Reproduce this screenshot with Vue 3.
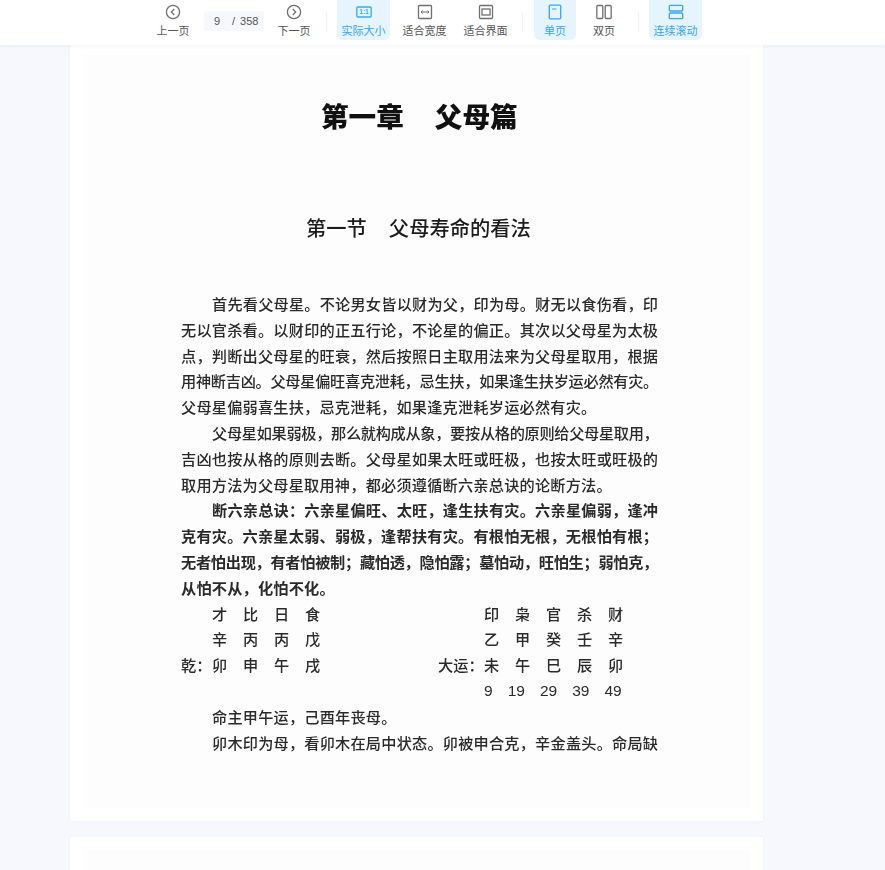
<template>
  <div class="reader">
    <header class="toolbar">
      <div class="group nav">
        <button class="tool">
          <svg class="icon" viewBox="0 0 16 16"><circle cx="8" cy="8" r="6.6" /><path d="M9.300 5 6.300 8l3 3" /></svg>
          <span>上一页</span>
        </button>
        <div class="page-box"><span class="cur">9</span><span>/</span><span class="total">358</span></div>
        <button class="tool">
          <svg class="icon" viewBox="0 0 16 16"><circle cx="8" cy="8" r="6.6" /><path d="M6.700 5l3 3-3 3" /></svg>
          <span>下一页</span>
        </button>
      </div>
      <i class="sep"></i>
      <div class="group">
        <button class="tool wide active">
          <svg class="icon" viewBox="0 0 16 16">
            <rect x="0.800" y="3" width="14.400" height="10" rx="1" />
            <text x="8" y="10.300" text-anchor="middle" class="ratio">1:1</text>
          </svg>
          <span>实际大小</span>
        </button>
        <button class="tool wide">
          <svg class="icon" viewBox="0 0 16 16"><rect x="1.500" y="1.500" width="13" height="13" rx="1" /><path class="thin" d="M4 8h8M5.500 6.500 4 8l1.500 1.500M10.500 6.500 12 8l-1.500 1.500" /></svg>
          <span>适合宽度</span>
        </button>
        <button class="tool wide">
          <svg class="icon" viewBox="0 0 16 16"><rect x="1.500" y="1.500" width="13" height="13" rx="1" /><rect x="4" y="5" width="8" height="6" /></svg>
          <span>适合界面</span>
        </button>
      </div>
      <i class="sep"></i>
      <div class="group views">
        <button class="tool narrow active">
          <svg class="icon" viewBox="0 0 16 16"><rect x="2.300" y="1.200" width="11.400" height="13.600" rx="1" /><path class="thin" d="M5 5h4.500" /></svg>
          <span>单页</span>
        </button>
        <button class="tool narrow">
          <svg class="icon" viewBox="0 0 16 16"><rect x="0.800" y="1.500" width="6" height="13" rx="1" /><rect x="9.200" y="1.500" width="6" height="13" rx="1" /></svg>
          <span>双页</span>
        </button>
      </div>
      <i class="sep"></i>
      <button class="tool wide active">
        <svg class="icon" viewBox="0 0 16 16"><rect x="1.300" y="1.300" width="13.400" height="5.700" rx="1" /><rect x="1.300" y="9" width="13.400" height="5.700" rx="1" /></svg>
        <span>连续滚动</span>
      </button>
    </header>

    <main class="pages">
      <section class="page">
        <div class="scan">
          <h1 class="chapter"><span>第一章</span><span>父母篇</span></h1>
          <h2 class="section"><span>第一节</span><span>父母寿命的看法</span></h2>

          <div class="body">
            <div v-for="(line, i) in lines" :key="i" class="line" :class="[line.fit, { indent: line.indent, bold: line.bold, free: line.free }]">{{ line.text }}</div>

            <div class="bazi">
              <template v-for="(row, r) in bazi" :key="r">
                <span v-for="(c, j) in row.left" :key="'l' + j">{{ c }}</span>
                <span></span>
                <span v-for="(c, j) in row.right" :key="'r' + j">{{ c }}</span>
              </template>
              <div class="ages"><span v-for="a in ages" :key="a">{{ a }}</span></div>
            </div>

            <div class="line indent free">命主甲午运，己酉年丧母。</div>
            <div class="line indent">卯木印为母，看卯木在局中状态。卯被申合克，辛金盖头。命局缺</div>
          </div>
        </div>
      </section>
      <section class="page next"><div class="scan"></div></section>
    </main>
  </div>
</template>

<script setup>
// some lines of the scan hold one or two more characters, so they get squeezed
const lines = [
  { text: '首先看父母星。不论男女皆以财为父，印为母。财无以食伤看，印', indent: true },
  { text: '无以官杀看。以财印的正五行论，不论星的偏正。其次以父母星为太极' },
  { text: '点，判断出父母星的旺衰，然后按照日主取用法来为父母星取用，根据' },
  { text: '用神断吉凶。父母星偏旺喜克泄耗，忌生扶，如果逢生扶岁运必然有灾。', fit: 'tight' },
  { text: '父母星偏弱喜生扶，忌克泄耗，如果逢克泄耗岁运必然有灾。', free: true },
  { text: '父母星如果弱极，那么就构成从象，要按从格的原则给父母星取用，', indent: true, fit: 'tighter' },
  { text: '吉凶也按从格的原则去断。父母星如果太旺或旺极，也按太旺或旺极的' },
  { text: '取用方法为父母星取用神，都必须遵循断六亲总诀的论断方法。', free: true },
  { text: '断六亲总诀：六亲星偏旺、太旺，逢生扶有灾。六亲星偏弱，逢冲', indent: true, bold: true },
  { text: '克有灾。六亲星太弱、弱极，逢帮扶有灾。有根怕无根，无根怕有根；', bold: true },
  { text: '无者怕出现，有者怕被制；藏怕透，隐怕露；墓怕动，旺怕生；弱怕克，', bold: true, fit: 'tight' },
  { text: '从怕不从，化怕不化。', bold: true, free: true }
]

const bazi = [
  { left: ['', '才', '比', '日', '食'], right: ['', '印', '枭', '官', '杀', '财'] },
  { left: ['', '辛', '丙', '丙', '戊'], right: ['', '乙', '甲', '癸', '壬', '辛'] },
  { left: ['乾：', '卯', '申', '午', '戌'], right: ['大运：', '未', '午', '巳', '辰', '卯'] }
]

const ages = [9, 19, 29, 39, 49]
</script>

<style scoped>
.reader {
  width: 885px;
  height: 870px;
  overflow: hidden;
  background: #f6f8fd;
  font-family: "Noto Sans CJK SC", "Liberation Sans", sans-serif;
}

.toolbar {
  height: 45px;
  box-sizing: border-box;
  padding-left: 156px;
  display: flex;
  align-items: flex-start;
  background: #fff;
  box-shadow: 0 1px 4px rgba(30, 50, 90, 0.06);
  position: relative;
}

.group {
  display: flex;
  align-items: flex-start;
  gap: 8px;
}

.group.nav {
  gap: 0;
  margin-right: 5px;
}

.group.views {
  gap: 7px;
  margin: 0 3px 0 1px;
}

.tool {
  width: 34px;
  height: 40px;
  padding: 4px 0 0;
  border: none;
  border-radius: 0 0 6px 6px;
  background: none;
  color: #555;
  font: inherit;
  font-size: 11px;
  line-height: 16px;
  display: flex;
  flex-direction: column;
  align-items: center;
  gap: 2px;
  cursor: pointer;
}

.tool.wide {
  width: 53px;
}

.tool.narrow {
  width: 42px;
}

.tool.active {
  background: #e6f4fe;
  color: #3aa6ee;
}

.sep {
  width: 1px;
  height: 20px;
  margin: 12px 10px 0;
  background: #f1f2f5;
}

.icon {
  width: 16px;
  height: 16px;
  fill: none;
  stroke: #707070;
  stroke-width: 1.300;
}

.active .icon {
  stroke: #3aa6ee;
}

.icon .thin {
  stroke-width: 1;
}

.icon .ratio {
  fill: #3aa6ee;
  stroke: none;
  font-family: "Liberation Sans", sans-serif;
  font-size: 6.500px;
  font-weight: 700;
}

.page-box {
  width: 60px;
  height: 20px;
  margin: 11px 13px 0 14px;
  box-sizing: border-box;
  padding-left: 10px;
  display: flex;
  align-items: center;
  background: #f6f8fd;
  border-radius: 2px;
  color: #555;
  font-family: "Liberation Sans", sans-serif;
  font-size: 11px;
}

.page-box .cur {
  width: 18px;
}

.page-box .total {
  margin-left: 5px;
}

.pages {
  width: 693px;
  margin-left: 70px;
  display: flex;
  flex-direction: column;
  gap: 16px;
}

.page {
  height: 776px;
  background: #fff;
  box-shadow: 0 0 3px rgba(30, 50, 90, 0.05);
  padding: 10px 13px 13px;
  box-sizing: border-box;
  flex: none;
}

.page.next {
  height: 200px;
  padding-top: 12px;
}

.scan {
  height: 100%;
  background: #fdfdfd;
  color: #222;
  filter: blur(0.3px);
}

.chapter {
  margin: 0;
  padding-top: 37px;
  padding-left: 238px;
  display: flex;
  gap: 31px;
  font-size: 27.600px;
  line-height: 46px;
  font-weight: 900;
  color: #111;
}

.section {
  margin: 74px 0 0;
  padding-left: 223px;
  display: flex;
  gap: 22px;
  font-size: 20.300px;
  line-height: 30px;
  font-weight: 500;
  color: #1c1c1c;
}

.body {
  width: 477px;
  margin: 49px 0 0 98px;
  font-size: 15.200px;
  line-height: 25.800px;
  font-weight: 500;
  color: #2a2a2a;
}

.line {
  white-space: nowrap;
  text-align: justify;
  text-align-last: justify;
}

.line.free {
  text-align-last: left;
  letter-spacing: 0.200px;
}

.line.tight {
  letter-spacing: -0.300px;
}

.line.tighter {
  letter-spacing: -0.800px;
}

.line.indent {
  padding-left: 31px;
}

.line.bold {
  font-weight: 700;
}

.bazi {
  display: grid;
  grid-template-columns: repeat(5, 31px) 102px 46px repeat(5, 31px);
  grid-auto-rows: 25.800px;
  white-space: nowrap;
}

.ages {
  grid-column: 8 / -1;
  grid-row: 4;
  display: flex;
  gap: 15px;
  font-family: "Liberation Sans", sans-serif;
  font-size: 15.500px;
}
</style>

<style>
html, body {
  margin: 0;
  overflow: hidden;
}
</style>
